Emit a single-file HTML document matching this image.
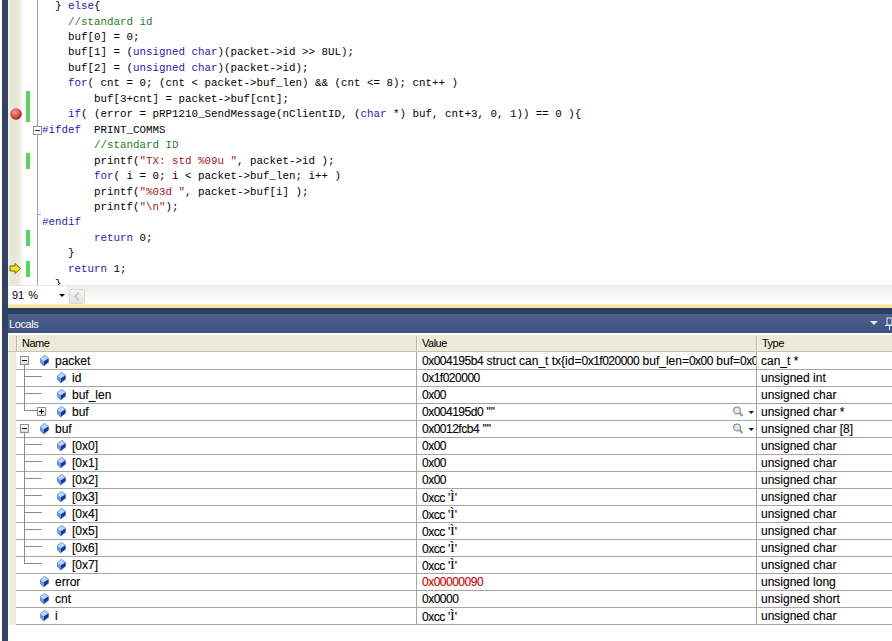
<!DOCTYPE html>
<html><head><meta charset="utf-8">
<style>
*{margin:0;padding:0;box-sizing:border-box}
html,body{width:892px;height:641px;overflow:hidden;background:#fff;position:relative}
body{font-family:"Liberation Sans",sans-serif}
.abs{position:absolute}
#lstrip{left:0;top:0;width:2px;height:641px;background:#fff}
#navy{left:2px;top:0;width:6px;height:641px;background:#334360}
#margin{left:8px;top:0;width:16px;height:285px;background:linear-gradient(to right,#f4f6ee 0%,#e9e6da 15%,#e8e6d2 40%,#e9e8da 65%,#fff 100%)}
#foldline{left:37px;top:0;width:1px;height:285px;background:#a0a0a0}
#code{left:42px;top:0;width:850px;height:285px;font-family:"Liberation Mono",monospace;font-size:10.84px;color:#000}
.cl{position:absolute;left:0;white-space:pre;line-height:15px}
.k{color:#1c1cb0}.c{color:#2a7a2a}.s{color:#a31515}
.green{left:26px;width:4px;background:#5ad55a}
#fold{left:33px;top:126px;width:9px;height:9px;border:1px solid #8c8c8c;background:#fff}
#fold i{position:absolute;left:1px;top:3px;width:5px;height:1px;background:#333}
#tick{left:37px;top:214px;width:4px;height:1px;background:#a0a0a0}
#bp{left:10px;top:106px}
#arrow{left:9px;top:260px}
#status{left:8px;top:285px;width:884px;height:19px;background:linear-gradient(#e8e8e2 0,#e8e8e2 1px,#efefea 1px,#f6f6f3 10px,#fdfdfc 17px,#fff 19px)}
#zoombox{left:8px;top:286px;width:58px;height:18px;background:#fff}
#zoomtxt{left:12px;top:289px;font-size:11px;color:#000;word-spacing:1px}
#dd{left:59px;top:294px;width:0;height:0;border-left:3px solid transparent;border-right:3px solid transparent;border-top:3px solid #000}
#sbtn{left:69px;top:289px;width:16px;height:15px;border:1px solid #d8d8d0;border-radius:2px;background:linear-gradient(#f4f4f0,#e4e4de)}
#yel{left:8px;top:304px;width:884px;height:4px;background:linear-gradient(#f9eed0,#f6e59a 50%,#f5ee9e)}
#dnavy{left:8px;top:308px;width:884px;height:6px;background:#2c3d62}
#title{left:8px;top:314px;width:884px;height:19px;background:linear-gradient(#4d6189,#3b517f)}
#ttxt{left:9px;top:318px;font-size:11px;color:#fff;letter-spacing:-0.4px}
#tdd{left:870px;top:321px;width:0;height:0;border-left:4px solid transparent;border-right:4px solid transparent;border-top:4px solid #dfe6f2}
#panel{left:8px;top:333px;width:884px;height:308px;background:#fff}
#hdr{left:8px;top:335px;width:884px;height:17px;background:#ece9d8;border-bottom:1px solid #c5c2b2}
.hd{position:absolute;top:0;height:16px;border-left:1px solid #fff}
.hdiv{position:absolute;top:1px;width:1px;height:15px;background:#b8b5a6;box-shadow:1px 0 0 #fff}
.ht{position:absolute;top:2px;font-size:11px;color:#000;letter-spacing:-0.5px}
#beige{left:8px;top:352px;width:8px;height:273px;background:linear-gradient(to right,#fff 0,#f2f0e6 12%,#ebe8da 100%)}
.row{left:0;width:892px;height:16px}
.row .nm,.row .vl,.row .tp{top:1px;font-size:12px;color:#000;white-space:nowrap;-webkit-text-stroke:0.12px currentColor}
.row .vl{left:422px;width:334px;overflow:hidden}
.row .tp{left:761px}
.gem{top:2px;width:9px;height:12px}
.gem svg{display:block}
.tbw{top:3px}
.tbox{position:relative;width:9px;height:9px;border:1px solid #8f8f8f;background:linear-gradient(#fff,#dcdcd4)}
.tbox .bh{position:absolute;left:1px;top:3px;width:5px;height:1px;background:#000}
.tbox .bv{position:absolute;left:3px;top:1px;width:1px;height:5px;background:#000}
.mag{left:731px;top:0}
.mag svg{display:block}
.ser{font-family:"Liberation Serif",serif;font-size:13px;position:relative;top:-1px}
.hl{left:16px;width:876px;height:1px;background:#a7a79f}
.vline{top:352px;width:1px;height:273px;background:#a7a79f}
.tl{background:#8c8c8c}
.hx{letter-spacing:-0.5px}
</style></head><body>
<div class="abs" id="lstrip"></div>
<div class="abs" id="navy"></div>
<div class="abs" id="margin"></div>
<div class="abs" id="foldline"></div>
<div class="abs green" style="top:91px;height:31px"></div>
<div class="abs green" style="top:153px;height:16px"></div>
<div class="abs green" style="top:230px;height:16px"></div>
<div class="abs green" style="top:261px;height:16px"></div>
<div class="abs" id="fold"><i></i></div>
<div class="abs" id="tick"></div>
<div class="abs" id="bp"><svg width="12" height="12" viewBox="0 0 12 12"><defs><radialGradient id="bpg" cx="0.4" cy="0.35" r="0.7"><stop offset="0" stop-color="#f29a9a"/><stop offset="0.5" stop-color="#dc5a50"/><stop offset="0.85" stop-color="#b02a26"/><stop offset="1" stop-color="#7a1412"/></radialGradient></defs><circle cx="6" cy="6" r="5.8" fill="url(#bpg)"/></svg></div>
<div class="abs" id="arrow"><svg width="13" height="11" viewBox="0 0 13 11"><polygon points="1,3 6,3 6,0.5 11.5,5.5 6,10.5 6,8 1,8" fill="#f6e81e" stroke="#6e6220" stroke-width="1"/></svg></div>
<div class="abs" id="code"><div class="cl" style="top:-1px">  } <span class="k">else</span>{</div>
<div class="cl" style="top:15px">    <span class="c">//standard id</span></div>
<div class="cl" style="top:30px">    buf[0] = 0;</div>
<div class="cl" style="top:45px">    buf[1] = (<span class="k">unsigned</span> <span class="k">char</span>)(packet-&gt;id &gt;&gt; 8UL);</div>
<div class="cl" style="top:61px">    buf[2] = (<span class="k">unsigned</span> <span class="k">char</span>)(packet-&gt;id);</div>
<div class="cl" style="top:76px">    <span class="k">for</span>( cnt = 0; (cnt &lt; packet-&gt;buf_len) &amp;&amp; (cnt &lt;= 8); cnt++ )</div>
<div class="cl" style="top:92px">        buf[3+cnt] = packet-&gt;buf[cnt];</div>
<div class="cl" style="top:107px">    <span class="k">if</span>( (error = pRP1210_SendMessage(nClientID, (<span class="k">char</span> *) buf, cnt+3, 0, 1)) == 0 ){</div>
<div class="cl" style="top:123px"><span class="k">#ifdef</span>  PRINT_COMMS</div>
<div class="cl" style="top:138px">        <span class="c">//standard ID</span></div>
<div class="cl" style="top:154px">        printf(<span class="s">"TX: std %09u "</span>, packet-&gt;id );</div>
<div class="cl" style="top:169px">        <span class="k">for</span>( i = 0; i &lt; packet-&gt;buf_len; i++ )</div>
<div class="cl" style="top:185px">        printf(<span class="s">"%03d "</span>, packet-&gt;buf[i] );</div>
<div class="cl" style="top:200px">        printf(<span class="s">"\n"</span>);</div>
<div class="cl" style="top:215px"><span class="k">#endif</span></div>
<div class="cl" style="top:231px">        <span class="k">return</span> 0;</div>
<div class="cl" style="top:246px">    }</div>
<div class="cl" style="top:262px">    <span class="k">return</span> 1;</div>
<div class="cl" style="top:277px">  }</div></div>
<div class="abs" id="status"></div>
<div class="abs" id="zoombox"></div>
<div class="abs" id="zoomtxt">91 %</div>
<div class="abs" id="dd"></div>
<div class="abs" id="sbtn"><svg width="14" height="13" viewBox="0 0 14 13" style="display:block"><polyline points="9,2.5 5,6.5 9,10.5" fill="none" stroke="#c8c8c8" stroke-width="2"/></svg></div>
<div class="abs" id="yel"></div>
<div class="abs" id="dnavy"></div>
<div class="abs" id="title"></div>
<div class="abs" id="ttxt">Locals</div>
<div class="abs" id="tdd"></div>
<div class="abs" id="pin"><svg width="8" height="14" viewBox="0 0 8 14" style="position:absolute;left:885px;top:317px"><rect x="2" y="1" width="5" height="7" fill="none" stroke="#e8ecf4" stroke-width="1"/><line x1="0" y1="8.5" x2="8" y2="8.5" stroke="#e8ecf4"/><line x1="4.5" y1="9" x2="4.5" y2="13" stroke="#e8ecf4"/></svg></div>
<div class="abs" id="panel"></div>
<div class="abs" id="hdr">
 <div class="hd" style="left:0;width:8px"></div>
 <div class="hdiv" style="left:8px"></div>
 <div class="hd" style="left:9px;width:399px"></div>
 <div class="ht" style="left:14px">Name</div>
 <div class="hdiv" style="left:408px"></div>
 <div class="ht" style="left:414px">Value</div>
 <div class="hdiv" style="left:748px"></div>
 <div class="ht" style="left:754px">Type</div>
</div>
<div class="abs" id="beige"></div>
<div class="abs row" style="top:353px"><div class="abs gem" style="left:40px"><svg width="9" height="12" viewBox="0 0 9 12"><polygon points="4.5,0.3 8.5,3.3 3.8,6.3 0.3,3.8" fill="#b4d8fc"/><polygon points="0.3,3.8 3.8,6.3 3.6,11 0.3,7.6" fill="#6a98e0"/><polygon points="3.8,6.3 8.5,3.3 8.5,7.2 3.6,11" fill="#17369a"/><polygon points="4.5,0.3 8.5,3.3 8.5,7.2 3.6,11 0.3,7.6 0.3,3.8" fill="none" stroke="#3d63b8" stroke-width="0.6"/></svg></div><div class="abs tbw" style="left:20px"><div class="tbox"><i class="bh"></i></div></div><div class="abs nm" style="left:55px">packet</div><div class="abs vl"><span class="hx">0x004195b4</span> struct can_t tx{id=<span class="hx">0x1f020000</span> buf_len=<span class="hx">0x00</span> buf=<span class="hx">0x004195d0</span> &quot;&quot; }</div><div class="abs tp">can_t *</div></div>
<div class="abs row" style="top:370px"><div class="abs gem" style="left:57px"><svg width="9" height="12" viewBox="0 0 9 12"><polygon points="4.5,0.3 8.5,3.3 3.8,6.3 0.3,3.8" fill="#b4d8fc"/><polygon points="0.3,3.8 3.8,6.3 3.6,11 0.3,7.6" fill="#6a98e0"/><polygon points="3.8,6.3 8.5,3.3 8.5,7.2 3.6,11" fill="#17369a"/><polygon points="4.5,0.3 8.5,3.3 8.5,7.2 3.6,11 0.3,7.6 0.3,3.8" fill="none" stroke="#3d63b8" stroke-width="0.6"/></svg></div><div class="abs nm" style="left:72px">id</div><div class="abs vl"><span class="hx">0x1f020000</span></div><div class="abs tp">unsigned int</div></div>
<div class="abs row" style="top:387px"><div class="abs gem" style="left:57px"><svg width="9" height="12" viewBox="0 0 9 12"><polygon points="4.5,0.3 8.5,3.3 3.8,6.3 0.3,3.8" fill="#b4d8fc"/><polygon points="0.3,3.8 3.8,6.3 3.6,11 0.3,7.6" fill="#6a98e0"/><polygon points="3.8,6.3 8.5,3.3 8.5,7.2 3.6,11" fill="#17369a"/><polygon points="4.5,0.3 8.5,3.3 8.5,7.2 3.6,11 0.3,7.6 0.3,3.8" fill="none" stroke="#3d63b8" stroke-width="0.6"/></svg></div><div class="abs nm" style="left:72px">buf_len</div><div class="abs vl"><span class="hx">0x00</span></div><div class="abs tp">unsigned char</div></div>
<div class="abs row" style="top:404px"><div class="abs gem" style="left:57px"><svg width="9" height="12" viewBox="0 0 9 12"><polygon points="4.5,0.3 8.5,3.3 3.8,6.3 0.3,3.8" fill="#b4d8fc"/><polygon points="0.3,3.8 3.8,6.3 3.6,11 0.3,7.6" fill="#6a98e0"/><polygon points="3.8,6.3 8.5,3.3 8.5,7.2 3.6,11" fill="#17369a"/><polygon points="4.5,0.3 8.5,3.3 8.5,7.2 3.6,11 0.3,7.6 0.3,3.8" fill="none" stroke="#3d63b8" stroke-width="0.6"/></svg></div><div class="abs tbw" style="left:37px"><div class="tbox"><i class="bh"></i><i class="bv"></i></div></div><div class="abs nm" style="left:72px">buf</div><div class="abs vl"><span class="hx">0x004195d0</span> &quot;&quot;</div><div class="abs mag"><svg width="24" height="16" viewBox="0 0 24 16"><line x1="8.3" y1="8.8" x2="11.5" y2="12" stroke="#a89860" stroke-width="2.2"/><circle cx="6" cy="6.5" r="3.4" fill="#dcecfa" stroke="#8c9cac" stroke-width="1.3"/><polygon points="17.5,7 23,7 20.25,10" fill="#0a1a6a"/></svg></div><div class="abs tp">unsigned char *</div></div>
<div class="abs row" style="top:421px"><div class="abs gem" style="left:40px"><svg width="9" height="12" viewBox="0 0 9 12"><polygon points="4.5,0.3 8.5,3.3 3.8,6.3 0.3,3.8" fill="#b4d8fc"/><polygon points="0.3,3.8 3.8,6.3 3.6,11 0.3,7.6" fill="#6a98e0"/><polygon points="3.8,6.3 8.5,3.3 8.5,7.2 3.6,11" fill="#17369a"/><polygon points="4.5,0.3 8.5,3.3 8.5,7.2 3.6,11 0.3,7.6 0.3,3.8" fill="none" stroke="#3d63b8" stroke-width="0.6"/></svg></div><div class="abs tbw" style="left:20px"><div class="tbox"><i class="bh"></i></div></div><div class="abs nm" style="left:55px">buf</div><div class="abs vl"><span class="hx">0x0012fcb4</span> &quot;&quot;</div><div class="abs mag"><svg width="24" height="16" viewBox="0 0 24 16"><line x1="8.3" y1="8.8" x2="11.5" y2="12" stroke="#a89860" stroke-width="2.2"/><circle cx="6" cy="6.5" r="3.4" fill="#dcecfa" stroke="#8c9cac" stroke-width="1.3"/><polygon points="17.5,7 23,7 20.25,10" fill="#0a1a6a"/></svg></div><div class="abs tp">unsigned char [8]</div></div>
<div class="abs row" style="top:438px"><div class="abs gem" style="left:57px"><svg width="9" height="12" viewBox="0 0 9 12"><polygon points="4.5,0.3 8.5,3.3 3.8,6.3 0.3,3.8" fill="#b4d8fc"/><polygon points="0.3,3.8 3.8,6.3 3.6,11 0.3,7.6" fill="#6a98e0"/><polygon points="3.8,6.3 8.5,3.3 8.5,7.2 3.6,11" fill="#17369a"/><polygon points="4.5,0.3 8.5,3.3 8.5,7.2 3.6,11 0.3,7.6 0.3,3.8" fill="none" stroke="#3d63b8" stroke-width="0.6"/></svg></div><div class="abs nm" style="left:72px">[0x0]</div><div class="abs vl"><span class="hx">0x00</span></div><div class="abs tp">unsigned char</div></div>
<div class="abs row" style="top:455px"><div class="abs gem" style="left:57px"><svg width="9" height="12" viewBox="0 0 9 12"><polygon points="4.5,0.3 8.5,3.3 3.8,6.3 0.3,3.8" fill="#b4d8fc"/><polygon points="0.3,3.8 3.8,6.3 3.6,11 0.3,7.6" fill="#6a98e0"/><polygon points="3.8,6.3 8.5,3.3 8.5,7.2 3.6,11" fill="#17369a"/><polygon points="4.5,0.3 8.5,3.3 8.5,7.2 3.6,11 0.3,7.6 0.3,3.8" fill="none" stroke="#3d63b8" stroke-width="0.6"/></svg></div><div class="abs nm" style="left:72px">[0x1]</div><div class="abs vl"><span class="hx">0x00</span></div><div class="abs tp">unsigned char</div></div>
<div class="abs row" style="top:472px"><div class="abs gem" style="left:57px"><svg width="9" height="12" viewBox="0 0 9 12"><polygon points="4.5,0.3 8.5,3.3 3.8,6.3 0.3,3.8" fill="#b4d8fc"/><polygon points="0.3,3.8 3.8,6.3 3.6,11 0.3,7.6" fill="#6a98e0"/><polygon points="3.8,6.3 8.5,3.3 8.5,7.2 3.6,11" fill="#17369a"/><polygon points="4.5,0.3 8.5,3.3 8.5,7.2 3.6,11 0.3,7.6 0.3,3.8" fill="none" stroke="#3d63b8" stroke-width="0.6"/></svg></div><div class="abs nm" style="left:72px">[0x2]</div><div class="abs vl"><span class="hx">0x00</span></div><div class="abs tp">unsigned char</div></div>
<div class="abs row" style="top:489px"><div class="abs gem" style="left:57px"><svg width="9" height="12" viewBox="0 0 9 12"><polygon points="4.5,0.3 8.5,3.3 3.8,6.3 0.3,3.8" fill="#b4d8fc"/><polygon points="0.3,3.8 3.8,6.3 3.6,11 0.3,7.6" fill="#6a98e0"/><polygon points="3.8,6.3 8.5,3.3 8.5,7.2 3.6,11" fill="#17369a"/><polygon points="4.5,0.3 8.5,3.3 8.5,7.2 3.6,11 0.3,7.6 0.3,3.8" fill="none" stroke="#3d63b8" stroke-width="0.6"/></svg></div><div class="abs nm" style="left:72px">[0x3]</div><div class="abs vl"><span class="hx">0xcc</span> &#x27;<span class="ser">Ì</span>&#x27;</div><div class="abs tp">unsigned char</div></div>
<div class="abs row" style="top:506px"><div class="abs gem" style="left:57px"><svg width="9" height="12" viewBox="0 0 9 12"><polygon points="4.5,0.3 8.5,3.3 3.8,6.3 0.3,3.8" fill="#b4d8fc"/><polygon points="0.3,3.8 3.8,6.3 3.6,11 0.3,7.6" fill="#6a98e0"/><polygon points="3.8,6.3 8.5,3.3 8.5,7.2 3.6,11" fill="#17369a"/><polygon points="4.5,0.3 8.5,3.3 8.5,7.2 3.6,11 0.3,7.6 0.3,3.8" fill="none" stroke="#3d63b8" stroke-width="0.6"/></svg></div><div class="abs nm" style="left:72px">[0x4]</div><div class="abs vl"><span class="hx">0xcc</span> &#x27;<span class="ser">Ì</span>&#x27;</div><div class="abs tp">unsigned char</div></div>
<div class="abs row" style="top:523px"><div class="abs gem" style="left:57px"><svg width="9" height="12" viewBox="0 0 9 12"><polygon points="4.5,0.3 8.5,3.3 3.8,6.3 0.3,3.8" fill="#b4d8fc"/><polygon points="0.3,3.8 3.8,6.3 3.6,11 0.3,7.6" fill="#6a98e0"/><polygon points="3.8,6.3 8.5,3.3 8.5,7.2 3.6,11" fill="#17369a"/><polygon points="4.5,0.3 8.5,3.3 8.5,7.2 3.6,11 0.3,7.6 0.3,3.8" fill="none" stroke="#3d63b8" stroke-width="0.6"/></svg></div><div class="abs nm" style="left:72px">[0x5]</div><div class="abs vl"><span class="hx">0xcc</span> &#x27;<span class="ser">Ì</span>&#x27;</div><div class="abs tp">unsigned char</div></div>
<div class="abs row" style="top:540px"><div class="abs gem" style="left:57px"><svg width="9" height="12" viewBox="0 0 9 12"><polygon points="4.5,0.3 8.5,3.3 3.8,6.3 0.3,3.8" fill="#b4d8fc"/><polygon points="0.3,3.8 3.8,6.3 3.6,11 0.3,7.6" fill="#6a98e0"/><polygon points="3.8,6.3 8.5,3.3 8.5,7.2 3.6,11" fill="#17369a"/><polygon points="4.5,0.3 8.5,3.3 8.5,7.2 3.6,11 0.3,7.6 0.3,3.8" fill="none" stroke="#3d63b8" stroke-width="0.6"/></svg></div><div class="abs nm" style="left:72px">[0x6]</div><div class="abs vl"><span class="hx">0xcc</span> &#x27;<span class="ser">Ì</span>&#x27;</div><div class="abs tp">unsigned char</div></div>
<div class="abs row" style="top:557px"><div class="abs gem" style="left:57px"><svg width="9" height="12" viewBox="0 0 9 12"><polygon points="4.5,0.3 8.5,3.3 3.8,6.3 0.3,3.8" fill="#b4d8fc"/><polygon points="0.3,3.8 3.8,6.3 3.6,11 0.3,7.6" fill="#6a98e0"/><polygon points="3.8,6.3 8.5,3.3 8.5,7.2 3.6,11" fill="#17369a"/><polygon points="4.5,0.3 8.5,3.3 8.5,7.2 3.6,11 0.3,7.6 0.3,3.8" fill="none" stroke="#3d63b8" stroke-width="0.6"/></svg></div><div class="abs nm" style="left:72px">[0x7]</div><div class="abs vl"><span class="hx">0xcc</span> &#x27;<span class="ser">Ì</span>&#x27;</div><div class="abs tp">unsigned char</div></div>
<div class="abs row" style="top:574px"><div class="abs gem" style="left:40px"><svg width="9" height="12" viewBox="0 0 9 12"><polygon points="4.5,0.3 8.5,3.3 3.8,6.3 0.3,3.8" fill="#b4d8fc"/><polygon points="0.3,3.8 3.8,6.3 3.6,11 0.3,7.6" fill="#6a98e0"/><polygon points="3.8,6.3 8.5,3.3 8.5,7.2 3.6,11" fill="#17369a"/><polygon points="4.5,0.3 8.5,3.3 8.5,7.2 3.6,11 0.3,7.6 0.3,3.8" fill="none" stroke="#3d63b8" stroke-width="0.6"/></svg></div><div class="abs nm" style="left:55px">error</div><div class="abs vl" style="color:#cc0000"><span class="hx">0x00000090</span></div><div class="abs tp">unsigned long</div></div>
<div class="abs row" style="top:591px"><div class="abs gem" style="left:40px"><svg width="9" height="12" viewBox="0 0 9 12"><polygon points="4.5,0.3 8.5,3.3 3.8,6.3 0.3,3.8" fill="#b4d8fc"/><polygon points="0.3,3.8 3.8,6.3 3.6,11 0.3,7.6" fill="#6a98e0"/><polygon points="3.8,6.3 8.5,3.3 8.5,7.2 3.6,11" fill="#17369a"/><polygon points="4.5,0.3 8.5,3.3 8.5,7.2 3.6,11 0.3,7.6 0.3,3.8" fill="none" stroke="#3d63b8" stroke-width="0.6"/></svg></div><div class="abs nm" style="left:55px">cnt</div><div class="abs vl"><span class="hx">0x0000</span></div><div class="abs tp">unsigned short</div></div>
<div class="abs row" style="top:608px"><div class="abs gem" style="left:40px"><svg width="9" height="12" viewBox="0 0 9 12"><polygon points="4.5,0.3 8.5,3.3 3.8,6.3 0.3,3.8" fill="#b4d8fc"/><polygon points="0.3,3.8 3.8,6.3 3.6,11 0.3,7.6" fill="#6a98e0"/><polygon points="3.8,6.3 8.5,3.3 8.5,7.2 3.6,11" fill="#17369a"/><polygon points="4.5,0.3 8.5,3.3 8.5,7.2 3.6,11 0.3,7.6 0.3,3.8" fill="none" stroke="#3d63b8" stroke-width="0.6"/></svg></div><div class="abs nm" style="left:55px">i</div><div class="abs vl"><span class="hx">0xcc</span> &#x27;<span class="ser">Ì</span>&#x27;</div><div class="abs tp">unsigned char</div></div>
<div class="abs hl" style="top:369px"></div>
<div class="abs hl" style="top:386px"></div>
<div class="abs hl" style="top:403px"></div>
<div class="abs hl" style="top:420px"></div>
<div class="abs hl" style="top:437px"></div>
<div class="abs hl" style="top:454px"></div>
<div class="abs hl" style="top:471px"></div>
<div class="abs hl" style="top:488px"></div>
<div class="abs hl" style="top:505px"></div>
<div class="abs hl" style="top:522px"></div>
<div class="abs hl" style="top:539px"></div>
<div class="abs hl" style="top:556px"></div>
<div class="abs hl" style="top:573px"></div>
<div class="abs hl" style="top:590px"></div>
<div class="abs hl" style="top:607px"></div>
<div class="abs hl" style="top:624px"></div>
<div class="abs vline" style="left:416px"></div>
<div class="abs vline" style="left:756px"></div>
<div class="abs tl" style="left:24px;top:365px;width:1px;height:46px"></div>
<div class="abs tl" style="left:25px;top:376px;width:17px;height:1px"></div>
<div class="abs tl" style="left:25px;top:393px;width:17px;height:1px"></div>
<div class="abs tl" style="left:25px;top:410px;width:12px;height:1px"></div>
<div class="abs tl" style="left:24px;top:433px;width:1px;height:131px"></div>
<div class="abs tl" style="left:25px;top:444px;width:17px;height:1px"></div>
<div class="abs tl" style="left:25px;top:461px;width:17px;height:1px"></div>
<div class="abs tl" style="left:25px;top:478px;width:17px;height:1px"></div>
<div class="abs tl" style="left:25px;top:495px;width:17px;height:1px"></div>
<div class="abs tl" style="left:25px;top:512px;width:17px;height:1px"></div>
<div class="abs tl" style="left:25px;top:529px;width:17px;height:1px"></div>
<div class="abs tl" style="left:25px;top:546px;width:17px;height:1px"></div>
<div class="abs tl" style="left:25px;top:563px;width:17px;height:1px"></div>
</body></html>
